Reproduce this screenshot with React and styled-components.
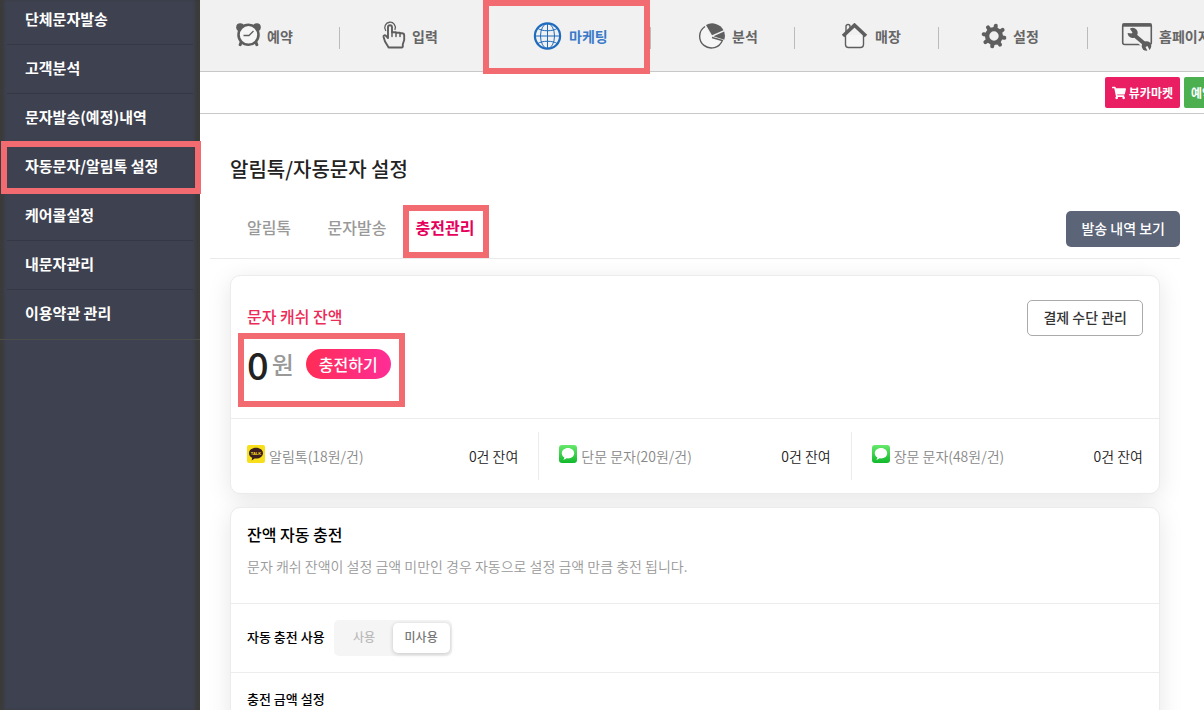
import * as React from 'react';
import styled, { createGlobalStyle, css } from 'styled-components';
import { FaShoppingCart } from 'react-icons/fa';

const GlobalStyle = createGlobalStyle`
    *, *::before, *::after {
        box-sizing: border-box;
    }
    body {
        margin: 0;
        overflow: hidden;
        background: #fff;
        color: #222;
        font-family: "Noto Sans CJK KR", "Noto Sans", sans-serif;
        font-size: 14px;
        line-height: 20px;
    }
    button {
        font: inherit;
        cursor: pointer;
    }
    a {
        color: inherit;
        text-decoration: none;
    }
    h1, h2, h3, p, ul {
        margin: 0;
        padding: 0;
    }
    ul {
        list-style: none;
    }
`;

const Page = styled.div`
    display: flex;
    height: 100vh;
    overflow: hidden;
`;

// red frame marking a step of the guide, drawn over its parent
const Marker = styled.span`
    position: absolute;
    inset: ${(props) => props.$inset || '0'};
    z-index: 2;
    border: 6px solid #f26b70;
    pointer-events: none;
`;

const Sidebar = styled.nav`
    flex: 0 0 200px;
    background: #3e4150;
    box-shadow: inset 5px 0 3px -1px #3b3b3b, inset -6px 0 3px -1px #3b3b3b;
`;

const SideList = styled.ul`
    margin-top: -4px;
    border-bottom: 1px solid #4c4c4a;
`;

const SideItem = styled.li`
    position: relative;
    padding: 0 7px;
`;

const SideLink = styled.a`
    display: block;
    padding: 13px 18px 15px;
    border-bottom: 1px solid ${(props) => (props.$last ? 'transparent' : '#353744')};
    color: #fff;
    font-size: 15px;
    font-weight: 700;
    white-space: nowrap;
`;

const Main = styled.div`
    flex: 1;
    min-width: 0;
    overflow: hidden;
`;

const TopMenu = styled.nav`
    display: flex;
    height: 72px;
    background: #f1f1f1;
    border-bottom: 1px solid #c8c8c8;
`;

const MenuLink = styled.a`
    position: relative;
    display: flex;
    flex: 0 0 ${(props) => props.$width}px;
    align-items: center;
    gap: 6px;
    padding-left: ${(props) => props.$lead}px;
    background: linear-gradient(#bbb, #bbb) right 27px / 1px 22px no-repeat;
    color: ${(props) => (props.$active ? '#3a7bc8' : '#666')};
    font-weight: 700;
    white-space: nowrap;
    svg {
        flex: none;
        color: ${(props) => (props.$active ? '#1f6bbd' : '#5e5e5e')};
    }
`;

const ShortcutBar = styled.div`
    display: grid;
    grid-template-columns: auto 20px;
    justify-content: end;
    align-items: center;
    gap: 4px;
    height: 42px;
    border-bottom: 1px solid #c8c8c8;
`;

const ShortcutButton = styled.button`
    display: flex;
    align-items: center;
    justify-self: start;
    gap: 3px;
    height: 31px;
    padding: 0 7px;
    border: 0;
    border-radius: 2px;
    background: ${(props) => props.$color};
    color: #fff;
    font-size: 12px;
    font-weight: 700;
    white-space: nowrap;
`;

const Content = styled.main`
    padding: 40px 24px 0 10px;
`;

const PageTitle = styled.h1`
    padding-left: 20px;
    font-size: 20px;
    font-weight: 500;
    line-height: 30px;
`;

const TabBar = styled.div`
    display: flex;
    justify-content: space-between;
    align-items: center;
    height: 61px;
    margin-top: 14px;
    padding-left: 15px;
    border-bottom: 1px solid #eaeaea;
`;

const Tabs = styled.div`
    display: flex;
`;

const Tab = styled.button`
    position: relative;
    width: 88px;
    padding: 0 0 2px;
    border: 0;
    background: none;
    color: ${(props) => (props.$active ? '#e6005c' : '#999')};
    font-size: 16px;
    font-weight: ${(props) => (props.$active ? 700 : 500)};
    line-height: 24px;
`;

const HistoryButton = styled.button`
    height: 36px;
    margin-top: 2px;
    padding: 0 15px 2px;
    border: 0;
    border-radius: 5px;
    background: #5c6578;
    color: #fff;
    font-weight: 500;
`;

const Card = styled.section`
    margin: ${(props) => props.$top}px 20px 0;
    border: 1px solid #ececec;
    border-radius: 10px;
    background: #fff;
    box-shadow: 0 5px 25px rgba(0, 0, 0, .1);
`;

const BalanceArea = styled.div`
    display: flex;
    justify-content: space-between;
    align-items: flex-start;
    height: 142px;
    padding: 24px 16px;
`;

const BalanceTitle = styled.h2`
    padding-top: 4px;
    color: #ed2b57;
    font-size: 16px;
    font-weight: 500;
    line-height: 24px;
`;

const BalanceRow = styled.div`
    position: relative;
    display: flex;
    align-items: center;
    height: 72px;
`;

const Amount = styled.strong`
    font-size: 38px;
    font-weight: 500;
    line-height: 48px;
`;

const Won = styled.span`
    margin: 0 12px 0 3px;
    color: #999;
    font-size: 24px;
    font-weight: 500;
`;

const ChargeButton = styled.button`
    height: 30px;
    padding: 0 13px;
    border: 0;
    border-radius: 15px;
    background: linear-gradient(90deg, #ff2d55, #ff2d96);
    color: #fff;
    font-size: 16px;
    font-weight: 500;
    line-height: 28px;
`;

const OutlineButton = styled.button`
    height: 36px;
    padding: 0 15px 2px;
    border: 1px solid #aaa;
    border-radius: 5px;
    background: #fff;
    color: #333;
    font-weight: 500;
`;

const PriceList = styled.ul`
    display: flex;
    padding: 13px 16px;
    border-top: 1px solid #ececec;
`;

const PriceItem = styled.li`
    box-sizing: content-box;
    display: flex;
    flex: 1 1 0;
    align-items: center;
    height: 48px;
    padding: 0 20px;
    border-left: 1px solid #ececec;
    font-weight: 350;
    &:first-child {
        padding-left: 0;
        border-left: 0;
    }
    &:last-child {
        padding-right: 0;
    }
    > svg {
        margin-bottom: 4px;
    }
`;

const PriceName = styled.span`
    flex: 1;
    margin-left: 4px;
    color: #888;
`;

const CardHead = styled.div`
    padding: 14px 16px 27px;
`;

const CardTitle = styled.h2`
    color: #000;
    font-size: 16px;
    font-weight: 500;
    line-height: 24px;
`;

const CardText = styled.p`
    margin-top: 10px;
    color: #999;
    font-weight: 350;
`;

const SettingRow = styled.div`
    display: flex;
    align-items: center;
    gap: 9px;
    padding: 16px;
    border-top: 1px solid #ececec;
`;

const SettingLabel = styled.h3`
    padding-bottom: 2px;
    color: #000;
    font-size: 13px;
    font-weight: 500;
`;

const Switcher = styled.div`
    display: flex;
    padding: 3px 2px;
    border-radius: 5px;
    background: #f5f5f5;
`;

const Choice = styled.label`
    position: relative;
    width: 57px;
    height: 30px;
    border-radius: 5px;
    color: #bbb;
    font-size: 12px;
    font-weight: 500;
    line-height: 28px;
    text-align: center;
    cursor: pointer;
    ${(props) => props.$active && css`
        background: #fff;
        color: #777;
        box-shadow: 0 1px 4px rgba(0, 0, 0, .2);
    `}
    input {
        position: absolute;
        opacity: 0;
    }
`;

const ClockIcon = () => (
    <svg width="25" height="26" viewBox="0 0 25 26" fill="none" stroke="currentColor">
        <circle cx="4.200" cy="4.200" r="4" fill="currentColor" stroke="none" />
        <circle cx="20.800" cy="4.200" r="4" fill="currentColor" stroke="none" />
        <path d="M5 19.500l-.8 2.200M20 19.500l.8 2.200" strokeWidth="3" strokeLinecap="round" />
        <circle cx="12.500" cy="11.800" r="10" fill="#f6f6f6" strokeWidth="2.600" />
        <path d="M7.500 12.500h5.500l4.500-4.500" strokeWidth="1.300" />
    </svg>
);

const HandIcon = () => (
    <svg width="24" height="30" viewBox="0 0 24 30" fill="none" stroke="currentColor" strokeLinecap="round" strokeLinejoin="round">
        <path d="M3.700 9.500A5.300 5.300 0 1 1 13 8.500" strokeWidth="1.300" />
        <path d="M6 17V6.200a2 2 0 0 1 4 0V11.200h3.500a1.800 1.800 0 0 1 1 .5h3a1.800 1.800 0 0 1 1 .6h1.500c1.500 0 2.200 1 2.200 2.200V19l-1.400 4.200V25.500a1 1 0 0 1-1 1H7.200a1 1 0 0 1-1-.8L3 20.500l-1.500-4.700c-.3-1.500 1.500-2 2.500-1L6 17z" strokeWidth="1.900" />
        <path d="M10 11v4.500M14 11.500v4M18 12v3.500" strokeWidth="1.500" />
    </svg>
);

const GlobeIcon = () => (
    <svg width="31" height="28" viewBox="0 0 31 28" fill="none" stroke="currentColor">
        <circle cx="15.500" cy="14" r="12.600" strokeWidth="2.200" />
        <ellipse cx="15.500" cy="14" rx="7" ry="12.500" strokeWidth="1" />
        <path d="M15.500 1.500v25M3 14h25M6 6.500c4 3 15 3 19 0M6 21.500c4-3 15-3 19 0" strokeWidth="1" />
    </svg>
);

const PieIcon = () => (
    <svg width="28" height="26" viewBox="0 0 28 26">
        <path d="M7 3.500A11.700 11.700 0 1 0 24.300 17.500L13.500 13.500z" fill="#f6f6f6" />
        <path d="M7 3.500A11.700 11.700 0 1 0 24.300 17.500L14 14.500" fill="none" stroke="currentColor" strokeWidth="1.400" />
        <path d="M8 2A12.800 12.800 0 0 1 25.500 7.200L14 12.300z" fill="currentColor" />
        <path d="M26.200 8.500A12.800 12.800 0 0 1 26.300 16.700L15.500 13.300z" fill="currentColor" />
    </svg>
);

const HouseIcon = () => (
    <svg width="28" height="26" viewBox="0 0 28 26" fill="none" stroke="currentColor">
        <path d="M4.500 12v9.500a3 3 0 0 0 3 3h12a3 3 0 0 0 3-3V12" fill="#f6f6f6" strokeWidth="1.400" />
        <path d="M5 9V3.500a2 2 0 0 1 4 0V5" strokeWidth="1.400" />
        <path d="M2 13L13.500 2.200 25 13" strokeWidth="3.600" />
    </svg>
);

const GearIcon = () => (
    <svg width="26" height="26" viewBox="-13 -13 26 26" fill="none" stroke="currentColor">
        <circle r="6.900" strokeWidth="4.400" />
        {[10, 55, 100, 145, 190, 235, 280, 325].map((angle) => (
            <path key={angle} d="M0-8V-10.500" strokeWidth="4" strokeLinecap="round" transform={`rotate(${angle})`} />
        ))}
    </svg>
);

const WrenchIcon = () => (
    <svg width="32" height="28" viewBox="0 0 32 28" overflow="visible" fill="none" stroke="currentColor">
        <rect x="1.700" y="2" width="28.600" height="20.500" rx="2" strokeWidth="1.600" />
        <path d="M1.500 3h29" strokeWidth="3.400" />
        <path d="M12 12l12 11" stroke="#f1f1f1" strokeWidth="7" />
        <path d="M12 12l13 11" strokeWidth="4" />
        <path d="M10 7a4.300 4.300 0 1 1-2.500 4.800l3.300.4 1.700-1.700z" fill="currentColor" strokeWidth="1.500" />
        <circle cx="25.500" cy="24" r="4.800" fill="currentColor" stroke="none" />
        <path d="M25.500 24.500l2.500 5" stroke="#f1f1f1" strokeWidth="2.200" />
    </svg>
);

const TalkIcon = () => (
    <svg width="18" height="18" viewBox="0 0 18 18">
        <rect width="18" height="18" rx="2" fill="#f8df1b" />
        <path d="M9 2.800c-4 0-7 2.400-7 5.400 0 2 1.200 3.600 3.200 4.600l-.6 2.700 3-2h1.400c4 0 7-2.300 7-5.300S13 2.800 9 2.800z" fill="#3b1f1e" />
        <text x="9" y="10" fill="#f8df1b" fontFamily="Liberation Sans, sans-serif" fontSize="4" fontWeight="700" textAnchor="middle">TALK</text>
    </svg>
);

const MessageIcon = () => (
    <svg width="18" height="18" viewBox="0 0 18 18">
        <defs>
            <linearGradient id="message-green" x1="0" y1="0" x2="0" y2="1">
                <stop offset="0" stopColor="#67e86b" />
                <stop offset="1" stopColor="#12b92c" />
            </linearGradient>
        </defs>
        <rect width="18" height="18" rx="3" fill="url(#message-green)" />
        <path d="M9 3C5.500 3 2.800 5.300 2.800 8.200c0 1.800 1 3.400 2.600 4.300-.1.800-.6 1.600-1.200 2.200 1.300 0 2.500-.5 3.300-1.400.5.100 1 .1 1.500.1 3.500 0 6.200-2.300 6.200-5.200S12.500 3 9 3z" fill="#fff" />
    </svg>
);

const sideItems = [
    { label: '단체문자발송' },
    { label: '고객분석' },
    { label: '문자발송(예정)내역' },
    { label: '자동문자/알림톡 설정', marked: true },
    { label: '케어콜설정' },
    { label: '내문자관리' },
    { label: '이용약관 관리' }
];

const menuItems = [
    { label: '예약', icon: ClockIcon, width: 140, lead: 36 },
    { label: '입력', icon: HandIcon, width: 144, lead: 42 },
    { label: '마케팅', icon: GlobeIcon, width: 167, lead: 48, active: true },
    { label: '분석', icon: PieIcon, width: 144, lead: 47 },
    { label: '매장', icon: HouseIcon, width: 144, lead: 46 },
    { label: '설정', icon: GearIcon, width: 149, lead: 42 },
    { label: '홈페이지', icon: WrenchIcon, width: 149, lead: 33 }
];

const prices = [
    { name: '알림톡(18원/건)', icon: TalkIcon },
    { name: '단문 문자(20원/건)', icon: MessageIcon },
    { name: '장문 문자(48원/건)', icon: MessageIcon }
];

const tabs = ['알림톡', '문자발송', '충전관리'];

const App = () => {
    const [tab, setTab] = React.useState('충전관리');
    const [autoCharge, setAutoCharge] = React.useState('미사용');

    return (
        <Page>
            <GlobalStyle />
            <Sidebar>
                <SideList>
                    {sideItems.map((item, index) => (
                        <SideItem key={item.label}>
                            <SideLink href="#" $last={index === sideItems.length - 1}>{item.label}</SideLink>
                            {item.marked ? <Marker $inset="-2px -1px -2px 1px" /> : null}
                        </SideItem>
                    ))}
                </SideList>
            </Sidebar>
            <Main>
                <TopMenu>
                    {menuItems.map(({ label, icon: MenuIcon, width, lead, active }) => (
                        <MenuLink key={label} href="#" $width={width} $lead={lead} $active={active}>
                            <MenuIcon />
                            {label}
                            {active ? <Marker $inset="0 1px -3px -1px" /> : null}
                        </MenuLink>
                    ))}
                </TopMenu>
                <ShortcutBar>
                    <ShortcutButton $color="#e91e63">
                        <FaShoppingCart size={14} />
                        뷰카마켓
                    </ShortcutButton>
                    <ShortcutButton $color="#4caf50">예약</ShortcutButton>
                </ShortcutBar>
                <Content>
                    <PageTitle>알림톡/자동문자 설정</PageTitle>
                    <TabBar>
                        <Tabs role="tablist">
                            {tabs.map((name) => (
                                <Tab
                                    key={name}
                                    role="tab"
                                    aria-selected={tab === name}
                                    $active={tab === name}
                                    onClick={() => setTab(name)}
                                >
                                    {name}
                                    {tab === name ? <Marker $inset="-10px 0 -17px 2px" /> : null}
                                </Tab>
                            ))}
                        </Tabs>
                        <HistoryButton>발송 내역 보기</HistoryButton>
                    </TabBar>
                    <Card $top={16}>
                        <BalanceArea>
                            <div>
                                <BalanceTitle>문자 캐쉬 잔액</BalanceTitle>
                                <BalanceRow>
                                    <Amount>0</Amount>
                                    <Won>원</Won>
                                    <ChargeButton>충전하기</ChargeButton>
                                    <Marker $inset="5px -14px -7px -9px" />
                                </BalanceRow>
                            </div>
                            <OutlineButton>결제 수단 관리</OutlineButton>
                        </BalanceArea>
                        <PriceList>
                            {prices.map(({ name, icon: PriceIcon }) => (
                                <PriceItem key={name}>
                                    <PriceIcon />
                                    <PriceName>{name}</PriceName>
                                    <span>0건 잔여</span>
                                </PriceItem>
                            ))}
                        </PriceList>
                    </Card>
                    <Card $top={13}>
                        <CardHead>
                            <CardTitle>잔액 자동 충전</CardTitle>
                            <CardText>문자 캐쉬 잔액이 설정 금액 미만인 경우 자동으로 설정 금액 만큼 충전 됩니다.</CardText>
                        </CardHead>
                        <SettingRow>
                            <SettingLabel>자동 충전 사용</SettingLabel>
                            <Switcher role="radiogroup" aria-label="자동 충전 사용">
                                {['사용', '미사용'].map((value) => (
                                    <Choice key={value} $active={autoCharge === value}>
                                        <input
                                            type="radio"
                                            name="autoCharge"
                                            checked={autoCharge === value}
                                            onChange={() => setAutoCharge(value)}
                                        />
                                        {value}
                                    </Choice>
                                ))}
                            </Switcher>
                        </SettingRow>
                        <SettingRow>
                            <SettingLabel>충전 금액 설정</SettingLabel>
                        </SettingRow>
                    </Card>
                </Content>
            </Main>
        </Page>
    );
};

export default App;
